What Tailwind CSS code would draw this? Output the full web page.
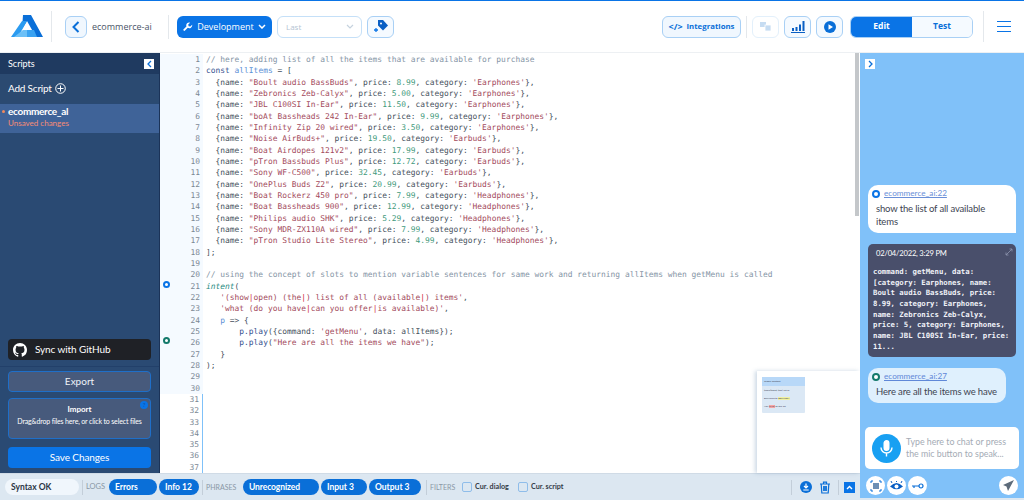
<!DOCTYPE html>
<html lang="en">
<head>
    <meta charset="UTF-8">
    <title>ecommerce-ai</title>
    <script src="https://cdn.jsdelivr.net/npm/@tailwindcss/browser@4"></script>
</head>
<body class="w-[1024px] h-[500px] overflow-hidden bg-white font-['Lato','Noto_Sans',sans-serif]">

<!-- header -->
<header class="h-[52px] border-t border-[#0a74e6] flex items-center justify-between pl-[11px] pr-[13px]">
    <div class="flex items-center">
        <svg width="32" height="23" viewBox="0 0 32 23">
            <path d="M12 0h8l12 22H25L16 6 11 14z" fill="#0a6fd8"/>
            <path d="M11 6l5 0-9 16H0z" fill="#2b9bf0"/>
            <path d="M3 22l9-7h9l-5 7z" fill="#6cc0f7"/>
            <path d="M16 15h7l3 7H16z" fill="#3aa3f2"/>
        </svg>
        <div class="w-px h-[31px] bg-[#e4e8ec] ml-[8px]"></div>
        <button class="ml-[13px] w-[22px] h-[22px] rounded-md border border-[#a9d0f5] bg-[#f0f7fe] flex items-center justify-center">
            <svg width="8" height="12" viewBox="0 0 8 12" fill="none" stroke="#0a6fd8" stroke-width="2"><path d="M6.5 1L1.5 6l5 5"/></svg>
        </button>
        <span class="ml-[5px] text-[9px] text-[#4a5568] w-[63px] whitespace-nowrap font-['Open_Sans',sans-serif]">ecommerce-ai</span>
        <div class="w-px h-[24px] bg-[#e4e8ec] ml-[13px]"></div>
        <button class="ml-[8px] w-[95px] h-[22px] rounded-md bg-[#0a74e6] text-white text-[9px] font-['Open_Sans',sans-serif] flex items-center justify-center gap-[4px]">
            <svg width="10" height="10" viewBox="0 0 24 24" fill="#fff"><path d="M22 6.5l-4.500 4.500-4-1-1-4L17 1.500a7 7 0 0 0-8.800 9L1.500 17.200a2.300 2.300 0 0 0 3.300 3.300l6.700-6.700A7 7 0 0 0 22 6.500z"/></svg>
            Development
            <svg width="8" height="5" viewBox="0 0 8 5" fill="none" stroke="#fff" stroke-width="1.500"><path d="M1 1l3 3 3-3"/></svg>
        </button>
        <div class="ml-[5px] w-[85px] h-[22px] rounded-md border border-[#c5e0f8] flex items-center justify-between pl-[8px] pr-[7px] text-[8px] text-[#b5c4d3] font-['Open_Sans',sans-serif]">
            Last
            <svg width="8" height="5" viewBox="0 0 8 5" fill="none" stroke="#c5d2de" stroke-width="1.200"><path d="M1 1l3 3 3-3"/></svg>
        </div>
        <button class="ml-[5px] w-[27px] h-[22px] rounded-md border border-[#a9d0f5] bg-[#f5faff] flex items-center justify-center">
            <svg width="14" height="13" viewBox="0 0 14 13"><path d="M4 0h5l5 5.500-5 5-5-5z" fill="#0a5fc4"/><circle cx="7" cy="3.500" r="1" fill="#fff"/><path d="M2 8v4M0 10h4" stroke="#0a74e6" stroke-width="1.300"/></svg>
        </button>
    </div>
    <div class="flex items-center">
        <button class="w-[79px] h-[22px] rounded-md border border-[#a9d0f5] bg-[#f0f7fe] text-[#0a6fd8] text-[7.8px] font-bold font-['Open_Sans',sans-serif] flex items-center justify-center gap-[4px]">
            <span class="text-[9px]">&lt;/&gt;</span> Integrations
        </button>
        <div class="w-px h-[22px] bg-[#e4e8ec] ml-[5px]"></div>
        <button class="ml-[5px] w-[27px] h-[22px] rounded-md border border-[#e3f0fb] flex items-center justify-center">
            <svg width="11" height="9" viewBox="0 0 11 9" fill="#c6dcf2"><rect width="6" height="5"/><rect x="5" y="3" width="6" height="6" stroke="#fff" stroke-width=".8"/></svg>
        </button>
        <button class="ml-[5px] w-[27px] h-[22px] rounded-md border border-[#a9d0f5] bg-[#f5faff] flex items-center justify-center">
            <svg width="14" height="12" viewBox="0 0 14 12" fill="#0a5fc4"><rect x="1" y="7" width="2" height="3"/><rect x="4.500" y="6" width="2" height="4"/><rect x="8" y="3.500" width="2" height="6.500"/><rect x="11.500" y="0" width="2" height="10"/><rect y="11" width="14" height="1"/></svg>
        </button>
        <button class="ml-[5px] w-[27px] h-[22px] rounded-md border border-[#a9d0f5] bg-[#f5faff] flex items-center justify-center">
            <svg width="12" height="12" viewBox="0 0 12 12"><circle cx="6" cy="6" r="6" fill="#0a6fd8"/><path d="M4.500 3.300v5.400L9 6z" fill="#fff"/></svg>
        </button>
        <div class="ml-[7px] w-[123px] h-[22px] rounded-md border border-[#a9d0f5] flex overflow-hidden text-[8.5px] font-bold font-['Open_Sans',sans-serif]">
            <div class="w-[61px] bg-[#0a74e6] text-white flex items-center justify-center">Edit</div>
            <div class="flex-1 bg-[#f5faff] text-[#0a6fd8] flex items-center justify-center">Test</div>
        </div>
        <div class="w-px h-[31px] bg-[#e4e8ec] ml-[10px]"></div>
        <div class="ml-[13px] w-[14px] flex flex-col gap-[3.500px]">
            <div class="h-[1.500px] bg-[#0a74e6]"></div>
            <div class="h-[1.500px] bg-[#0a74e6]"></div>
            <div class="h-[1.500px] bg-[#0a74e6]"></div>
        </div>
    </div>
</header>

<div class="flex h-[448px]">
    <div class="w-[860px] flex flex-col">
        <div class="flex h-[421px] relative border-t border-[#edf0f3]">

            <!-- sidebar -->
            <aside class="w-[160px] shrink-0 bg-[#2a4a73] border-r border-[#1b3358] flex flex-col text-white">
                <div class="h-[21px] bg-[#1f3a60] flex items-center justify-between pl-[8px] pr-[5px] text-[9px]">
                    Scripts
                    <span class="w-[10px] h-[10px] bg-white flex items-center justify-center">
                        <svg width="5" height="8" viewBox="0 0 5 8" fill="none" stroke="#0a6fd8" stroke-width="1.300"><path d="M4 1L1 4l3 3"/></svg>
                    </span>
                </div>
                <div class="h-[29px] flex items-center pl-[8px] gap-[3px] text-[10px] tracking-[-0.2px] bg-[#2b4a71]">
                    Add Script
                    <svg width="11" height="11" viewBox="0 0 11 11" fill="none" stroke="#fff" stroke-width="1"><circle cx="5.500" cy="5.500" r="4.800"/><path d="M5.500 2.500v6M2.500 5.500h6"/></svg>
                </div>
                <div class="h-[29px] mt-[1px] bg-[#3f6398] pl-[8px] pt-[1px] relative">
                    <span class="absolute left-[2px] top-[6px] w-[3px] h-[3px] rounded-full bg-[#f08a5d]"></span>
                    <div class="text-[10px] font-bold leading-[13px] tracking-[-0.3px]">ecommerce_al</div>
                    <div class="text-[8px] leading-[11px] text-[#f68c76]">Unsaved changes</div>
                </div>
                <div class="flex-1"></div>
                <div class="border-b border-[#22406a] pb-[6px] px-[8px]">
                    <div class="h-[21px] rounded-[4px] bg-[#1f2126] flex items-center pl-[5px] gap-[8px] text-[10px] tracking-[-0.1px]">
                        <svg width="14" height="14" viewBox="0 0 16 16" fill="#fff"><path d="M8 0C3.580 0 0 3.580 0 8c0 3.540 2.290 6.530 5.470 7.590.4.070.55-.17.55-.38 0-.19-.01-.82-.01-1.490-2.010.37-2.530-.49-2.690-.94-.09-.23-.48-.94-.82-1.130-.28-.15-.68-.52-.01-.53.630-.01 1.080.58 1.230.82.720 1.210 1.870.87 2.330.66.070-.52.280-.87.510-1.070-1.780-.2-3.640-.89-3.640-3.950 0-.87.310-1.590.820-2.150-.08-.2-.36-1.020.08-2.120 0 0 .67-.21 2.200.82.640-.18 1.320-.27 2-.27s1.360.09 2 .27c1.530-1.040 2.200-.82 2.200-.82.440 1.100.160 1.920.080 2.120.510.560.820 1.270.820 2.150 0 3.070-1.870 3.750-3.650 3.950.290.250.540.730.540 1.480 0 1.070-.010 1.930-.010 2.200 0 .210.150.460.550.380A8.010 8.010 0 0 0 16 8c0-4.420-3.580-8-8-8z"/></svg>
                        Sync with GitHub
                    </div>
                </div>
                <div class="px-[8px] pt-[4px] pb-[5px] flex flex-col">
                    <div class="h-[21px] rounded-[4px] bg-[#475a7c] border border-[#1f6fc9] flex items-center justify-center text-[10px] text-[#eef3f8]">Export</div>
                    <div class="mt-[6px] h-[41px] rounded-[4px] bg-[#475a7c] border border-[#1f6fc9] relative flex flex-col items-center pt-[4px]">
                        <span class="absolute right-[2px] top-[2px] w-[8px] h-[8px] rounded-full bg-[#0a74e6] text-[6px] leading-[8px] text-center text-[#0a4fa8]">?</span>
                        <div class="text-[8px] font-bold leading-[12px]">Import</div>
                        <div class="text-[7px] leading-[12px] tracking-[-0.15px] whitespace-nowrap">Drag&amp;drop files here, or click to select files</div>
                    </div>
                    <div class="mt-[8px] h-[21px] rounded-[4px] bg-[#0a74e6] flex items-center justify-center text-[10px] tracking-[-0.1px]">Save Changes</div>
                </div>
            </aside>

            <!-- editor -->
            <div class="flex-1 flex font-['DejaVu_Sans_Mono','Liberation_Mono',monospace] text-[7.91px] leading-[11.33px] text-[#45505c] pt-[1px] overflow-hidden">
                <div class="w-[43px] shrink-0 bg-[#f5faff] relative text-right pr-[3px] text-[#7b8794] [&>div]:h-[11.33px]">
                    <span class="absolute left-[3px] top-[227px] w-[7px] h-[7px] rounded-full border-[2px] border-[#0a74e6] bg-white"></span>
                    <span class="absolute left-[3px] top-[283px] w-[7px] h-[7px] rounded-full border-[2px] border-[#13796b] bg-white"></span>
                    <div>1</div><div>2</div><div>3</div><div>4</div><div>5</div><div>6</div><div>7</div><div>8</div><div>9</div><div>10</div><div>11</div><div>12</div><div>13</div><div>14</div><div>15</div><div>16</div><div>17</div><div>18</div><div>19</div><div>20</div><div>21</div><div>22</div><div>23</div><div>24</div><div>25</div><div>26</div><div>27</div><div>28</div><div>29</div><div>30</div>
                    <div class="bg-white -mr-[3px] pr-[3px] border-r border-[#7fc1f9]">31</div><div class="bg-white -mr-[3px] pr-[3px] border-r border-[#7fc1f9]">32</div><div class="bg-white -mr-[3px] pr-[3px] border-r border-[#7fc1f9]">33</div><div class="bg-white -mr-[3px] pr-[3px] border-r border-[#7fc1f9]">34</div><div class="bg-white -mr-[3px] pr-[3px] border-r border-[#7fc1f9]">35</div><div class="bg-white -mr-[3px] pr-[3px] border-r border-[#7fc1f9]">36</div><div class="bg-white -mr-[3px] pr-[3px] border-r border-[#7fc1f9]">37</div>
                </div>
                <div class="pl-[3px] flex-1 [&>div]:h-[11.33px] [&>div]:whitespace-pre">
                    <div><span class="text-[#8494a5]">// here, adding list of all the items that are available for purchase</span></div>
                    <div><span class="text-[#34518f]">const</span> <span class="text-[#5a8fd6]">allItems</span> = [</div>
                    <div>  {name: <span class="text-[#a34a5c]">"Boult audio BassBuds"</span>, price: <span class="text-[#3f9a7c]">8.99</span>, category: <span class="text-[#a34a5c]">'Earphones'</span>},</div>
                    <div>  {name: <span class="text-[#a34a5c]">"Zebronics Zeb-Calyx"</span>, price: <span class="text-[#3f9a7c]">5.00</span>, category: <span class="text-[#a34a5c]">'Earphones'</span>},</div>
                    <div>  {name: <span class="text-[#a34a5c]">"JBL C100SI In-Ear"</span>, price: <span class="text-[#3f9a7c]">11.50</span>, category: <span class="text-[#a34a5c]">'Earphones'</span>},</div>
                    <div>  {name: <span class="text-[#a34a5c]">"boAt Bassheads 242 In-Ear"</span>, price: <span class="text-[#3f9a7c]">9.99</span>, category: <span class="text-[#a34a5c]">'Earphones'</span>},</div>
                    <div>  {name: <span class="text-[#a34a5c]">"Infinity Zip 20 wired"</span>, price: <span class="text-[#3f9a7c]">3.50</span>, category: <span class="text-[#a34a5c]">'Earphones'</span>},</div>
                    <div>  {name: <span class="text-[#a34a5c]">"Noise AirBuds+"</span>, price: <span class="text-[#3f9a7c]">19.50</span>, category: <span class="text-[#a34a5c]">'Earbuds'</span>},</div>
                    <div>  {name: <span class="text-[#a34a5c]">"Boat Airdopes 121v2"</span>, price: <span class="text-[#3f9a7c]">17.99</span>, category: <span class="text-[#a34a5c]">'Earbuds'</span>},</div>
                    <div>  {name: <span class="text-[#a34a5c]">"pTron Bassbuds Plus"</span>, price: <span class="text-[#3f9a7c]">12.72</span>, category: <span class="text-[#a34a5c]">'Earbuds'</span>},</div>
                    <div>  {name: <span class="text-[#a34a5c]">"Sony WF-C500"</span>, price: <span class="text-[#3f9a7c]">32.45</span>, category: <span class="text-[#a34a5c]">'Earbuds'</span>},</div>
                    <div>  {name: <span class="text-[#a34a5c]">"OnePlus Buds Z2"</span>, price: <span class="text-[#3f9a7c]">20.99</span>, category: <span class="text-[#a34a5c]">'Earbuds'</span>},</div>
                    <div>  {name: <span class="text-[#a34a5c]">"Boat Rockerz 450 pro"</span>, price: <span class="text-[#3f9a7c]">7.99</span>, category: <span class="text-[#a34a5c]">'Headphones'</span>},</div>
                    <div>  {name: <span class="text-[#a34a5c]">"Boat Bassheads 900"</span>, price: <span class="text-[#3f9a7c]">12.99</span>, category: <span class="text-[#a34a5c]">'Headphones'</span>},</div>
                    <div>  {name: <span class="text-[#a34a5c]">"Philips audio SHK"</span>, price: <span class="text-[#3f9a7c]">5.29</span>, category: <span class="text-[#a34a5c]">'Headphones'</span>},</div>
                    <div>  {name: <span class="text-[#a34a5c]">"Sony MDR-ZX110A wired"</span>, price: <span class="text-[#3f9a7c]">7.99</span>, category: <span class="text-[#a34a5c]">'Headphones'</span>},</div>
                    <div>  {name: <span class="text-[#a34a5c]">"pTron Studio Lite Stereo"</span>, price: <span class="text-[#3f9a7c]">4.99</span>, category: <span class="text-[#a34a5c]">'Headphones'</span>},</div>
                    <div>];</div>
                    <div></div>
                    <div><span class="text-[#8494a5]">// using the concept of slots to mention variable sentences for same work and returning allItems when getMenu is called</span></div>
                    <div><span class="text-[#1f8a80] italic">intent</span>(</div>
                    <div>   <span class="text-[#a34a5c]">'(show<span class="text-[#d01f3c]">|</span>open) (the<span class="text-[#d01f3c]">|</span>) list of all (available<span class="text-[#d01f3c]">|</span>) items'</span>,</div>
                    <div>   <span class="text-[#a34a5c]">'what (do you have<span class="text-[#d01f3c]">|</span>can you offer<span class="text-[#d01f3c]">|</span>is available)'</span>,</div>
                    <div>   <span class="text-[#5a8fd6]">p</span> =&gt; {</div>
                    <div>       <span class="text-[#34518f]">p.play</span>({command: <span class="text-[#a34a5c]">'getMenu'</span>, data: allItems});</div>
                    <div>       <span class="text-[#34518f]">p.play</span>(<span class="text-[#a34a5c]">"Here are all the items we have"</span>);</div>
                    <div>   }</div>
                    <div>);</div>
                </div>
            </div>

            <!-- scrollbar -->
            <div class="w-[4px] h-[163px] bg-[#c4c7ca] absolute right-[1px] top-0"></div>

            <!-- minimap -->
            <div class="absolute right-0 bottom-0 w-[103px] h-[102px] bg-white shadow-[-2px_0_4px_rgba(90,130,170,0.3)] pl-[5px] pt-[6px]">
                <div class="w-[43px] h-[36px] bg-[#dbe8f5] font-['Lato',sans-serif] text-[2.500px] leading-[3px] text-[#445] rounded-[1px]">
                    <div class="h-[9px] bg-[#b8d8f8] pl-[2px] pt-[3px]">Global Context</div>
                    <div class="pl-[2px] pt-[3px]">(show|open) (the) list of</div>
                    <div class="pl-[2px] pt-[5px]">Delivered to <span class="bg-[#f0f0a0]">DELIVERY</span></div>
                    <div class="pl-[2px] pt-[5px]">Ask <span class="bg-[#f5a5a5]">(TAG)</span> to the art</div>
                </div>
            </div>
        </div>

        <!-- bottom bar -->
        <footer class="flex-1 bg-[#dce7f1] border-t border-[#d0dbe6] flex items-center pl-[5px] pr-[5px] text-[8.5px] font-bold text-white whitespace-nowrap">
            <div class="w-[74px] h-[16px] rounded-full bg-[#f0f6fc] text-[#2b3544] pl-[6px] flex items-center">Syntax OK</div>
            <div class="w-px h-[15px] bg-[#c3ced9] ml-[3px]"></div>
            <span class="ml-[3px] w-[19px] text-[#8a97a6] font-normal text-[7.5px]">LOGS</span>
            <div class="ml-[4px] w-[48px] h-[16px] rounded-full bg-[#0a6fd8] pl-[6px] flex items-center">Errors</div>
            <div class="ml-[2px] w-[40px] h-[16px] rounded-full bg-[#0a6fd8] pl-[6px] flex items-center">Info 12</div>
            <div class="w-px h-[15px] bg-[#c3ced9] ml-[3px]"></div>
            <span class="ml-[3px] w-[34px] text-[#8a97a6] font-normal text-[7px]">PHRASES</span>
            <div class="ml-[3px] w-[76px] h-[16px] rounded-full bg-[#0a6fd8] pl-[6px] flex items-center tracking-[-0.1px]">Unrecognized</div>
            <div class="ml-[2px] w-[46px] h-[16px] rounded-full bg-[#0a6fd8] pl-[6px] flex items-center">Input 3</div>
            <div class="ml-[2px] w-[52px] h-[16px] rounded-full bg-[#0a6fd8] pl-[6px] flex items-center">Output 3</div>
            <div class="w-px h-[15px] bg-[#c3ced9] ml-[5px]"></div>
            <span class="ml-[3px] w-[29px] text-[#8a97a6] font-normal text-[7px]">FILTERS</span>
            <div class="ml-[3px] w-[10px] h-[10px] rounded-[2px] border border-[#8fbdea]"></div>
            <span class="ml-[3px] w-[36px] text-[#333b47] text-[7.2px]">Cur. dialog</span>
            <div class="ml-[7px] w-[10px] h-[10px] rounded-[2px] border border-[#8fbdea]"></div>
            <span class="ml-[3px] text-[#333b47] text-[7.2px]">Cur. script</span>
            <div class="flex-1"></div>
            <div class="w-px h-[15px] bg-[#c3ced9]"></div>
            <svg class="ml-[8px]" width="12" height="12" viewBox="0 0 12 12"><circle cx="6" cy="6" r="6" fill="#0a6fd8"/><path d="M6 2.500v4M4 5l2 2 2-2M3.300 9h5.400" stroke="#fff" stroke-width="1.200" fill="none"/></svg>
            <svg class="ml-[7px]" width="12" height="13" viewBox="0 0 12 13" fill="none" stroke="#0a6fd8" stroke-width="1.200"><path d="M1 3h10M4.500 3V1.200h3V3M2.200 3l.6 9h6.400l.6-9M4.700 5v5M6 5v5M7.300 5v5"/></svg>
            <div class="w-px h-[15px] bg-[#c3ced9] ml-[7px]"></div>
            <div class="ml-[5px] w-[11px] h-[11px] bg-[#0a74e6] flex items-center justify-center">
                <svg width="7" height="5" viewBox="0 0 7 5" fill="none" stroke="#fff" stroke-width="1.400"><path d="M1 4l2.500-2.500L6 4"/></svg>
            </div>
        </footer>
    </div>

    <!-- chat panel -->
    <aside class="w-[164px] bg-[#80c1f9] border-t border-[#edf0f3] border-b-[2px] border-b-[#dce7f1] relative flex flex-col px-[8px] text-[#3d4452]">
        <span class="absolute left-[5px] top-[6px] w-[10px] h-[10px] bg-white flex items-center justify-center">
            <svg width="5" height="8" viewBox="0 0 5 8" fill="none" stroke="#0a6fd8" stroke-width="1.300"><path d="M1 1l3 3-3 3"/></svg>
        </span>
        <div class="mt-[132px] bg-white rounded-[10px] rounded-br-none h-[48px] pl-[4px] pr-[20px] pt-[3px]">
            <div class="flex items-center gap-[4px] text-[8.2px] text-[#6a8fd8] underline leading-[11px]">
                <span class="w-[8px] h-[8px] rounded-full border-[2px] border-[#0a74e6] bg-white"></span>ecommerce_ai:22
            </div>
            <div class="text-[9.5px] tracking-[-0.15px] leading-[13px] pl-[4px] mt-[3px]">show the list of all available items</div>
        </div>
        <div class="mt-[11px] bg-[#494f6b] rounded-[5px] h-[113px] text-white relative pl-[5px]">
            <div class="text-[7.6px] pt-[4px] pl-[3px] tracking-[-0.2px] leading-[11px]">02/04/2022, 3:29 PM</div>
            <svg class="absolute right-[3px] top-[4px]" width="8" height="8" viewBox="0 0 8 8" stroke="#8e96ae" stroke-width=".8" fill="none"><path d="M1 7l6-6M4.500 1H7v2.500M1 4.500V7h2.500"/></svg>
            <div class="mt-[8px] font-['DejaVu_Sans_Mono','Liberation_Mono',monospace] font-bold text-[#f0f2f8] text-[7.300px] leading-[10.650px]">
                <div>command: getMenu, data:</div>
                <div>[category: Earphones, name:</div>
                <div>Boult audio BassBuds, price:</div>
                <div>8.99, category: Earphones,</div>
                <div>name: Zebronics Zeb-Calyx,</div>
                <div>price: 5, category: Earphones,</div>
                <div>name: JBL C100SI In-Ear, price:</div>
                <div>11...</div>
            </div>
        </div>
        <div class="mt-[11px] w-[138px] h-[35px] bg-[#dff0fd] rounded-[10px] px-[4px] pt-[3px]">
            <div class="flex items-center gap-[4px] text-[8.2px] text-[#5f88d8] underline leading-[11px]">
                <span class="w-[8px] h-[8px] rounded-full border-[2px] border-[#13796b] bg-white"></span>ecommerce_ai:27
            </div>
            <div class="text-[9.5px] tracking-[-0.15px] leading-[13px] pl-[4px] mt-[3px] whitespace-nowrap">Here are all the items we have</div>
        </div>
        <div class="-mx-[3px] mt-[24px] h-[42px] bg-white rounded-[5px] flex items-center pl-[7px] pr-[12px] gap-[5px]">
            <div class="w-[29px] h-[29px] rounded-full bg-[#18a0f2] flex items-center justify-center shrink-0">
                <svg width="13" height="17" viewBox="0 0 13 17" fill="none" stroke="#fff" stroke-width="1.400"><rect x="4.200" y="0.700" width="4.600" height="9.500" rx="2.300" fill="#fff"/><path d="M1 7.500a5.500 5.500 0 0 0 11 0M6.500 13v3.500"/></svg>
            </div>
            <div class="text-[8.8px] leading-[12px] text-[#a4abb5]">Type here to chat or press the mic button to speak...</div>
        </div>
        <div class="-mx-[2px] mt-[7px] flex items-center">
            <span class="w-[19px] h-[19px] rounded-full bg-white flex items-center justify-center">
                <svg width="12" height="12" viewBox="0 0 12 12" fill="none" stroke="#0a6fd8" stroke-width="1"><path d="M1 3V1h2M9 1h2v2M11 9v2H9M3 11H1V9"/><rect x="3" y="3" width="6" height="6" fill="#6d8fb5" stroke="none"/></svg>
            </span>
            <span class="ml-[2px] w-[19px] h-[19px] rounded-full bg-white flex items-center justify-center">
                <svg width="13" height="10" viewBox="0 0 13 10"><path d="M0 5.500Q6.500-1.500 13 5.500 6.500 11 0 5.500z" fill="#0a5fc4"/><circle cx="6.500" cy="5.500" r="2" fill="#fff"/><path d="M2 2L1 0M6.500 1V0M11 2l1-2" stroke="#0a5fc4"/></svg>
            </span>
            <span class="ml-[2px] w-[19px] h-[19px] rounded-full bg-white flex items-center justify-center">
                <svg width="12" height="6" viewBox="0 0 12 6" fill="none" stroke="#0a6fd8" stroke-width="1.200"><circle cx="9" cy="3" r="2"/><path d="M7 3H0M2 3v2"/></svg>
            </span>
            <span class="ml-auto w-[19px] h-[19px] rounded-full bg-white flex items-center justify-center">
                <svg width="11" height="11" viewBox="0 0 11 11" fill="#5d6b7a"><path d="M11 0L0 5l3.500 1.500L5 11z"/></svg>
            </span>
        </div>
    </aside>
</div>

</body>
</html>
